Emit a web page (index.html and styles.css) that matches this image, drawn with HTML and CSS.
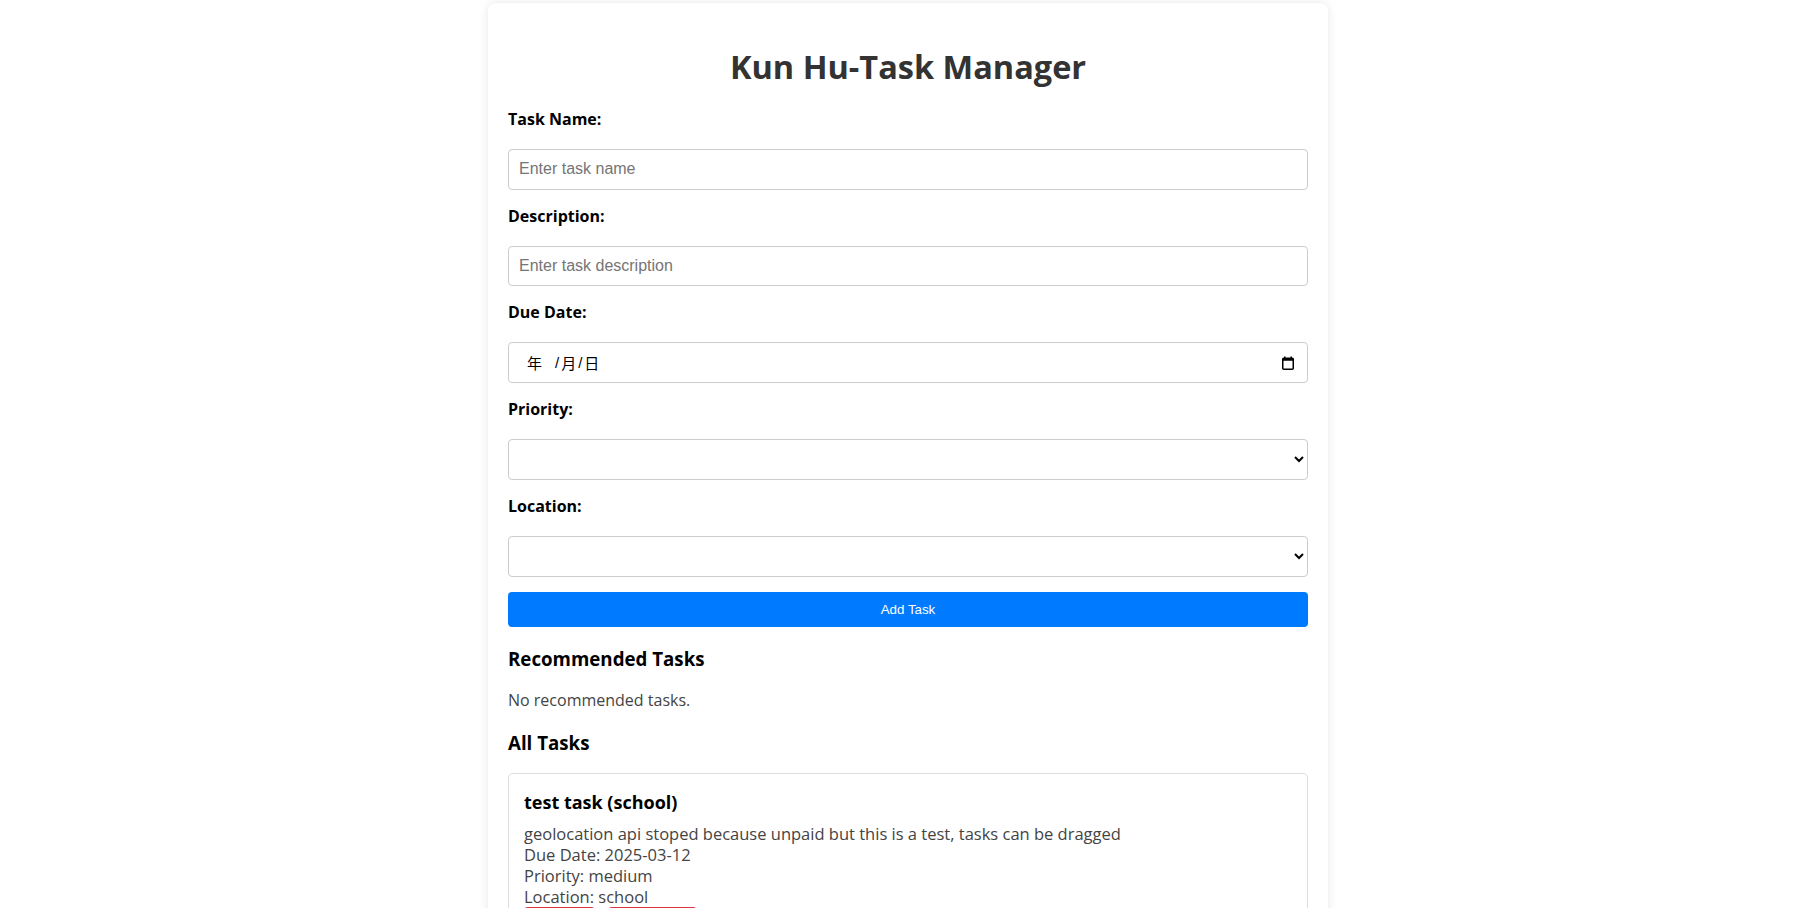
FILE: index.html
```html
<!DOCTYPE html>
<html lang="en">
<head>
<meta charset="utf-8">
<title>Kun Hu-Task Manager</title>
<link rel="stylesheet" href="styles.css">
</head>
<body>
<div class="container">
  <h1 class="title">Kun Hu-Task Manager</h1>
  <form class="task-form">
    <label class="field-label" for="name">Task Name:</label>
    <input class="field text-field" id="name" type="text" placeholder="Enter task name">

    <label class="field-label" for="desc">Description:</label>
    <input class="field text-field" id="desc" type="text" placeholder="Enter task description">

    <label class="field-label">Due Date:</label>
    <div class="field date-field">
      <span class="date-text"><span class="seg-year">年</span><span class="sep">/</span><span class="seg">月</span><span class="sep">/</span><span class="seg">日</span></span>
      <svg class="cal-icon" width="12" height="14" viewBox="0 0 12 14">
        <rect x="0.75" y="2.25" width="10.5" height="11" rx="1" fill="none" stroke="#000" stroke-width="1.5"/>
        <rect x="0.75" y="2.25" width="10.5" height="2.5" fill="#000"/>
        <rect x="2" y="0.5" width="1.5" height="2" fill="#000"/>
        <rect x="8.5" y="0.5" width="1.5" height="2" fill="#000"/>
      </svg>
    </div>

    <label class="field-label" for="prio">Priority:</label>
    <select class="field select-field" id="prio"><option></option></select>

    <label class="field-label" for="loc">Location:</label>
    <select class="field select-field" id="loc"><option></option></select>

    <button type="button" class="add-btn">Add Task</button>
  </form>

  <h3 class="section-title">Recommended Tasks</h3>
  <p class="empty-note">No recommended tasks.</p>

  <h3 class="section-title all-title">All Tasks</h3>
  <div class="task-card">
    <h3 class="task-title">test task (school)</h3>
    <div class="task-body">
      <div>geolocation api stoped because unpaid but this is a test, tasks can be dragged</div>
      <div>Due Date: 2025-03-12</div>
      <div>Priority: medium</div>
      <div>Location: school</div>
    </div>
    <div class="task-actions">
      <button type="button" class="danger-btn">Delete</button>
      <button type="button" class="danger-btn">Complete</button>
    </div>
  </div>
</div>
</body>
</html>
```

FILE: styles.css
```css
html, body {
  background: #ffffff;
}
body {
  margin: 0;
  padding: 3px 0 0 21px;
  font-family: "Open Sans", "Noto Sans", sans-serif;
  color: #000;
}
.container {
  box-sizing: border-box;
  width: 840px;
  margin: 0 auto;
  padding: 20px;
  background: #fff;
  border-radius: 8px;
  box-shadow: 0 0 10px rgba(0, 0, 0, 0.1);
}
.title {
  font-size: 32.5px;
  line-height: 46px;
  font-weight: 700;
  text-align: center;
  color: #333;
  margin: 21px 0 18px;
}
.task-form {
  display: flex;
  flex-direction: column;
}
.field-label {
  display: block;
  font-size: 16px;
  line-height: 22px;
  font-weight: 700;
  margin-bottom: 19px;
}
.field {
  box-sizing: border-box;
  width: 100%;
  height: 41px;
  margin: 0 0 15px;
  padding: 0 10px;
  border: 1px solid #ccc;
  border-radius: 4px;
  background: #fff;
  font-family: "Liberation Sans", Arial, sans-serif;
  font-size: 16px;
  color: #000;
}
.text-field {
  height: 40.5px;
}
.field::placeholder {
  color: #757575;
}
.date-field {
  display: flex;
  align-items: center;
  justify-content: space-between;
  padding: 0 13px 0 18px;
}
.date-text {
  display: flex;
  align-items: center;
  font-family: "Noto Sans CJK SC", sans-serif;
  font-size: 15px;
  line-height: 18px;
  color: #000;
}
.seg-year {
  display: inline-block;
  width: 26px;
}
.seg {
  display: inline-block;
}
.sep {
  display: inline-block;
  margin: 0 2px;
  font-family: "Liberation Sans", Arial, sans-serif;
}
.cal-icon {
  display: block;
}
.select-field {
  padding: 0 4px;
}
.add-btn {
  height: 35px;
  margin: 0;
  border: none;
  border-radius: 4px;
  background: #007bff;
  color: #fff;
  font-family: "Liberation Sans", Arial, sans-serif;
  font-size: 13.33px;
}
.section-title {
  font-size: 18.72px;
  font-weight: 700;
  margin: 19px 0;
}
.all-title {
  margin-top: 19px;
  margin-bottom: 18px;
}
.empty-note {
  font-size: 16px;
  line-height: 21px;
  color: #444;
  margin: 19px 0;
}
.task-card {
  border: 1px solid #ddd;
  border-radius: 5px;
  padding: 17px 15px 15px;
}
.task-title {
  font-size: 18px;
  line-height: 22px;
  font-weight: 700;
  margin: 0 0 10px;
}
.task-body {
  font-size: 16.5px;
  line-height: 21px;
  color: #444;
}
.task-actions {
  display: flex;
  gap: 13px;
  margin-top: 0;
}
.danger-btn {
  padding: 6px 16px;
  border: none;
  border-radius: 4px;
  background: #dc3545;
  color: #fff;
  font-family: "Liberation Sans", Arial, sans-serif;
  font-size: 13.33px;
}
```
